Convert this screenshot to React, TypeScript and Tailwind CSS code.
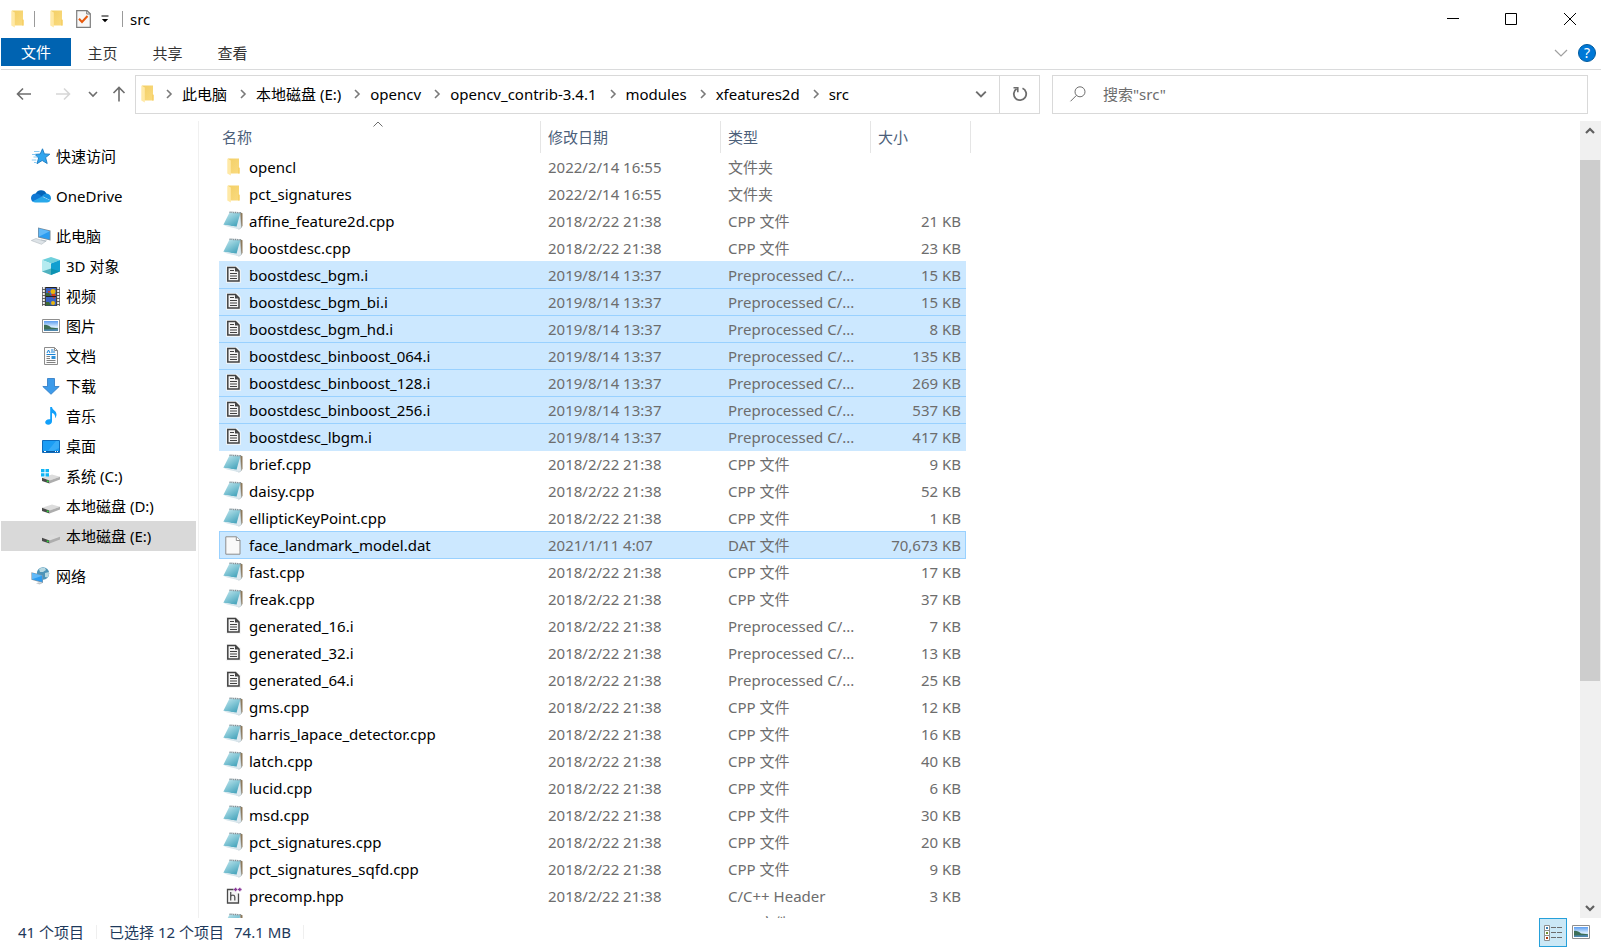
import type { ReactNode } from "react"

type FileKind = "folder" | "cpp" | "i" | "dat" | "hpp"

interface FileEntry {
    name: string
    date: string
    kind: FileKind
    size?: string
    selected?: boolean
    focused?: boolean
}

const typeNames: Record<FileKind, string> = {
    folder: "文件夹",
    cpp: "CPP 文件",
    i: "Preprocessed C/...",
    dat: "DAT 文件",
    hpp: "C/C++ Header",
}

const OLD = "2018/2/22 21:38"
const MID = "2019/8/14 13:37"

const files: FileEntry[] = [
    { name: "opencl", date: "2022/2/14 16:55", kind: "folder" },
    { name: "pct_signatures", date: "2022/2/14 16:55", kind: "folder" },
    { name: "affine_feature2d.cpp", date: OLD, kind: "cpp", size: "21 KB" },
    { name: "boostdesc.cpp", date: OLD, kind: "cpp", size: "23 KB" },
    { name: "boostdesc_bgm.i", date: MID, kind: "i", size: "15 KB", selected: true },
    { name: "boostdesc_bgm_bi.i", date: MID, kind: "i", size: "15 KB", selected: true },
    { name: "boostdesc_bgm_hd.i", date: MID, kind: "i", size: "8 KB", selected: true },
    { name: "boostdesc_binboost_064.i", date: MID, kind: "i", size: "135 KB", selected: true },
    { name: "boostdesc_binboost_128.i", date: MID, kind: "i", size: "269 KB", selected: true },
    { name: "boostdesc_binboost_256.i", date: MID, kind: "i", size: "537 KB", selected: true },
    { name: "boostdesc_lbgm.i", date: MID, kind: "i", size: "417 KB", selected: true },
    { name: "brief.cpp", date: OLD, kind: "cpp", size: "9 KB" },
    { name: "daisy.cpp", date: OLD, kind: "cpp", size: "52 KB" },
    { name: "ellipticKeyPoint.cpp", date: OLD, kind: "cpp", size: "1 KB" },
    { name: "face_landmark_model.dat", date: "2021/1/11 4:07", kind: "dat", size: "70,673 KB", focused: true },
    { name: "fast.cpp", date: OLD, kind: "cpp", size: "17 KB" },
    { name: "freak.cpp", date: OLD, kind: "cpp", size: "37 KB" },
    { name: "generated_16.i", date: OLD, kind: "i", size: "7 KB" },
    { name: "generated_32.i", date: OLD, kind: "i", size: "13 KB" },
    { name: "generated_64.i", date: OLD, kind: "i", size: "25 KB" },
    { name: "gms.cpp", date: OLD, kind: "cpp", size: "12 KB" },
    { name: "harris_lapace_detector.cpp", date: OLD, kind: "cpp", size: "16 KB" },
    { name: "latch.cpp", date: OLD, kind: "cpp", size: "40 KB" },
    { name: "lucid.cpp", date: OLD, kind: "cpp", size: "6 KB" },
    { name: "msd.cpp", date: OLD, kind: "cpp", size: "30 KB" },
    { name: "pct_signatures.cpp", date: OLD, kind: "cpp", size: "20 KB" },
    { name: "pct_signatures_sqfd.cpp", date: OLD, kind: "cpp", size: "9 KB" },
    { name: "precomp.hpp", date: OLD, kind: "hpp", size: "3 KB" },
    { name: "sift.cpp", date: OLD, kind: "cpp", size: "44 KB" },
]

const crumbs = ["此电脑", "本地磁盘 (E:)", "opencv", "opencv_contrib-3.4.1", "modules", "xfeatures2d", "src"]

/* ---------- icons ---------- */

function FolderIcon() {
    return (
        <svg width="13" height="18" viewBox="0 0 13 18" className="shrink-0" aria-hidden="true">
            <defs>
                <linearGradient id="folderBack" x1="0" y1="0" x2="1" y2="1">
                    <stop offset="0" stopColor="#f3cf66" />
                    <stop offset="1" stopColor="#fadb80" />
                </linearGradient>
            </defs>
            <path d="M1 0.5h11v9.5h.6v5.500H3z" fill="url(#folderBack)" />
            <path d="M.3.5 3.800 2.500V17.500L.3 15.500z" fill="#ffe9a6" />
            <path d="M11.200 9.500h1.300v6h-1.300z" fill="#f6cd62" />
        </svg>
    )
}

function CppIcon() {
    return (
        <svg width="20" height="19" viewBox="0 0 20 19" className="shrink-0" aria-hidden="true">
            <defs>
                <linearGradient id="padBlue" x1="0" y1="0" x2=".7" y2="1">
                    <stop offset="0" stopColor="#c9e9f0" />
                    <stop offset=".5" stopColor="#86c8d7" />
                    <stop offset="1" stopColor="#45a3bb" />
                </linearGradient>
            </defs>
            <path d="M17 1.300 19.500 2.200V15L17.600 17.500z" fill="#8d7a5c" />
            <path d="M17 2.200 18.400 16.500 16 18.300 11.500 16z" fill="#dfeaf0" stroke="#a9b9c2" strokeWidth=".5" />
            <path d="M6.500 1.500 17.300 2.200 13.500 15.800.4 13.800z" fill="url(#padBlue)" />
            <path d="M.4 13.800 13.500 15.800 16 18.300 4 15.500z" fill="#d8e6ec" />
            <path d="M6.500 1.200 18 1.800" stroke="#7f8f96" strokeWidth="1.500" strokeDasharray="1.200 .6" />
        </svg>
    )
}

function PreprocessedIcon() {
    return (
        <svg width="15" height="17" viewBox="0 0 15 17" className="shrink-0" aria-hidden="true">
            <path d="M0 0h11l4 4v13H0z" fill="#f4f4f4" opacity=".8" />
            <path d="M1.800 1.500h7.700l3.500 3.500v10H1.800z" fill="#f4f4f4" stroke="#424242" strokeWidth="1.500" />
            <path d="M9 1.500v4h4z" fill="#424242" />
            <path d="M4 4.500h4M4 7.500h7M4 10h7M4 12.500h7" stroke="#424242" strokeWidth="1.200" />
        </svg>
    )
}

function BlankIcon() {
    return (
        <svg width="16" height="19" viewBox="0 0 16 19" className="shrink-0" aria-hidden="true">
            <path d="M.8.8h10.700l3.500 3.500v13.900H.8z" fill="#f9f9f9" stroke="#8c8c8c" />
            <path d="M11.300.8v3.700H15" fill="#fff" stroke="#8c8c8c" />
        </svg>
    )
}

function HeaderIcon() {
    return (
        <svg width="17" height="18" viewBox="0 0 17 18" className="shrink-0" aria-hidden="true">
            <path d="M8.500 2.500H2.500v13.500h11V6.500" fill="#f4f4f4" stroke="#4a4a4a" strokeWidth="1.300" />
            <path d="M5.700 5v8.500M5.700 9.700q.3-1.500 2.100-1.500t2 1.800v3.500" fill="none" stroke="#555" strokeWidth="1.300" />
            <path d="M8.800 2.500h3.600M10.600.7v3.600M13 2.500h3.600M14.800.7v3.600" stroke="#8a3a9a" strokeWidth="1.400" />
        </svg>
    )
}

const fileIcons: Record<FileKind, ReactNode> = {
    folder: <FolderIcon />,
    cpp: <CppIcon />,
    i: <PreprocessedIcon />,
    dat: <BlankIcon />,
    hpp: <HeaderIcon />,
}

function StarIcon() {
    return (
        <svg width="20" height="17" viewBox="0 0 20 17" aria-hidden="true">
            <path d="M11.500.8 13.400 5.900 18.800 6.200 14.600 9.600 16.200 15.500 11.200 12.500 6 15.700 7.600 10 4 6.400 9.200 6z" fill="#30a5ee" stroke="#1878c0" strokeWidth=".9" />
            <path d="M3 3.500h5.500M1 6.500h4M2.500 9h4M.8 12h4.500M3 14.500h2.500" stroke="#7cc4f2" strokeWidth=".9" />
        </svg>
    )
}

function CloudIcon() {
    return (
        <svg width="20" height="14" viewBox="0 0 20 14" aria-hidden="true">
            <path d="M4.500 5A6 6 0 0 1 15.500 4.500L11 8z" fill="#0364b8" />
            <path d="M4.500 4.500C1.500 4.800 0 6.800 0 9c0 1.500.6 2.800 1.700 3.700L12 8.300 8 5.200C7 4.600 5.800 4.400 4.500 4.500z" fill="#0f78d4" />
            <path d="M15.500 4.500c2.600.3 4.500 2.200 4.500 4.700 0 .8-.2 1.500-.5 2L11 7c1-1.300 2.500-2.500 4.500-2.500z" fill="#1490df" />
            <path d="M1.500 12.400 11 7.500l8.500 4c-.7 1.200-2 1.900-3.500 1.900H4.500c-1.100 0-2.200-.4-3-1z" fill="#28a8ea" />
        </svg>
    )
}

function ComputerIcon() {
    return (
        <svg width="20" height="18" viewBox="0 0 20 18" aria-hidden="true">
            <path d="M7 .5 19.500 3.500V13.500L7 10.500z" fill="#7a8b99" />
            <path d="M7.800 1.600 18.700 4.300V12.400L7.800 9.700z" fill="#2c9cf0" />
            <path d="M7.800 1.600 18.700 4.300 7.800 9.700z" fill="#62b9f7" />
            <path d="M10 12.500 16 13.500 14.500 15 9 13.800z" fill="#b8c2c9" />
            <path d="M.3 13.500 5 11.500 14.500 14.500 10.500 17.300z" fill="#dde3e7" stroke="#b2bbc1" strokeWidth=".6" />
        </svg>
    )
}

function CubeIcon() {
    return (
        <svg width="18" height="18" viewBox="0 0 18 18" aria-hidden="true">
            <path d="M9 0 18 3 9 6.500 0 3z" fill="#6fd0dc" />
            <path d="M0 3 9 6.500V18L0 14.500z" fill="#b5ebf0" />
            <path d="M18 3 9 6.500V18l9-3.500z" fill="#109fd0" />
            <path d="M0 14.500 9 11.500 18 14.500 9 18z" fill="#0c8a9c" opacity=".6" />
        </svg>
    )
}

function VideoIcon() {
    return (
        <svg width="18" height="19" viewBox="0 0 18 19" aria-hidden="true">
            <path d="M0 0h18v19H0z" fill="#606060" />
            <path d="M1.800 0v19M16.200 0v19" stroke="#f0f0f0" strokeWidth="2" strokeDasharray="2 1" />
            <path d="M3.500 0h11v19h-11z" fill="#222" />
            <path d="M4 1h10v8H4zM4 10h10v8.500H4z" fill="#3b63c4" />
            <path d="M4 6h3l2 3H4zM4 15h3l2 3.500H4z" fill="#3f6b33" />
            <circle cx="11" cy="4.500" r="2.500" fill="#e9b60c" />
            <path d="M9.500 7h4v2h-4zM6 4h2v1.500H6z" fill="#d63d18" />
            <circle cx="11" cy="16" r="2" fill="#e9b60c" />
            <path d="M10.500 10h2.500l-1 2z" fill="#d63d18" />
        </svg>
    )
}

function PictureIcon() {
    return (
        <svg width="18" height="14" viewBox="0 0 18 14" aria-hidden="true">
            <defs>
                <linearGradient id="sky" x1="0" y1="0" x2="0" y2="1">
                    <stop offset="0" stopColor="#5c9df0" />
                    <stop offset=".6" stopColor="#dcefff" />
                    <stop offset="1" stopColor="#7fb2d8" />
                </linearGradient>
            </defs>
            <path d="M.5.5h17v13H.5z" fill="#fff" stroke="#8e8e8e" />
            <path d="M2 2h14v10H2z" fill="url(#sky)" />
            <path d="M2 6c2-.5 5 .5 7 2.500l7 .8V12H2z" fill="#3d6f57" />
            <path d="M2 10.500 16 10v2H2z" fill="#4f88ae" />
        </svg>
    )
}

function DocumentIcon() {
    return (
        <svg width="18" height="18" viewBox="0 0 18 18" aria-hidden="true">
            <path d="M2.500.5h10l3 3v14h-13z" fill="#fbfbfb" stroke="#8c8c8c" />
            <path d="M12.500.5v3h3" fill="none" stroke="#8c8c8c" />
            <path d="M5 6l1.500-3L8 6M9 3h2.500M9 5h4" stroke="#1683d8" fill="none" />
            <path d="M4.500 7.500h9" stroke="#1683d8" />
            <path d="M4.500 9.500h3.500M4.500 11.500h3.500M4.500 13.500h9M4.500 15.500h9" stroke="#808080" />
            <path d="M9.500 9h4v3h-4z" fill="#2f8fd6" />
        </svg>
    )
}

function DownloadIcon() {
    return (
        <svg width="18" height="17" viewBox="0 0 18 17" aria-hidden="true">
            <path d="M5.500.5h7v8h4.700L9 16.300.8 8.500h4.700z" fill="#3d9bea" stroke="#2a76c2" strokeWidth=".8" />
        </svg>
    )
}

function MusicIcon() {
    return (
        <svg width="18" height="18" viewBox="0 0 18 18" aria-hidden="true">
            <path d="M8.200 0h1.800c.2 3 4.500 3.500 4.500 7.500 0 1.500-.6 2.800-1.500 3.800.7-3-.8-4.800-3-5.200v8.200c0 2-1.700 3.500-3.800 3.500-1.700 0-3-.9-3-2.500 0-2 2.300-3.600 5-3z" fill="#12a0fa" />
        </svg>
    )
}

function DesktopIcon() {
    return (
        <svg width="18" height="13" viewBox="0 0 18 13" aria-hidden="true">
            <path d="M.5.5h17v12H.5z" fill="#1b9df5" stroke="#0f6cbd" />
            <path d="M17 1v7L9 12H5L14 1z" fill="#4bb4fa" opacity=".6" />
            <path d="M1 11.500h16" stroke="#0a5aa0" />
            <path d="M2 11.500h2M13 11.500h1M15 11.500h1" stroke="#fff" />
        </svg>
    )
}

function DriveIcon({ system = false }: { system?: boolean }) {
    return (
        <svg width="19" height="16" viewBox="0 0 19 16" aria-hidden="true">
            <path d="M1 9.800 11 6.500 19 8.800 8.500 12.500z" fill="#dcdcdc" />
            <path d="M1 9.800 8.500 12.500V15.500L1 13z" fill="#4a4a4a" />
            <path d="M8.500 12.500 19 8.800v2.800L8.500 15.500z" fill="#adadad" />
            <path d="M5.800 12.600h1.800v1.500H5.800z" fill="#2fe03a" />
            {system && <path d="M0 1h3.500v3.200H0zM4.500 1H8v3.200H4.500zM0 5.200h3.500v3.200H0zM4.500 5.200H8v3.200H4.500z" fill="#10b5f5" />}
        </svg>
    )
}

function NetworkIcon() {
    return (
        <svg width="19" height="18" viewBox="0 0 19 18" aria-hidden="true">
            <circle cx="12" cy="6.500" r="6.200" fill="#4d94b8" />
            <path d="M8 2q3-2 6-1l1 2-3 2-3 0zM14 6l4-1q.4 3-1.200 5.500L14 10z" fill="#b9d9e2" />
            <path d="M.4 5.200 12 8.200V16L.4 12.800z" fill="#8497a5" />
            <path d="M1 6 11.300 8.700V15L1 12.300z" fill="#2c9cf0" />
            <path d="M1 6 11.300 8.700 1 12.300z" fill="#62b9f7" />
            <path d="M5 16.200 8 15.300l3.500 1L8.500 17.500z" fill="#c0c8cd" />
        </svg>
    )
}

function Chevron({ dir, size = 10, bold = false, className = "" }: { dir: "right" | "down" | "up"; size?: number; bold?: boolean; className?: string }) {
    const d = dir === "right" ? "M3 1l4 4-4 4" : dir === "down" ? "M1 3l4 4 4-4" : "M1 7l4-4 4 4"
    return (
        <svg width={size} height={size} viewBox="0 0 10 10" className={className} aria-hidden="true">
            <path d={d} fill="none" stroke="currentColor" strokeWidth={bold ? 2.2 : 1.6} />
        </svg>
    )
}

/* ---------- window parts ---------- */

function TitleBar() {
    return (
        <header className="flex h-[38px] items-center justify-between pr-px pl-[11px]">
            <div className="flex items-center">
                <FolderIcon />
                <span className="ml-2.5 h-4 w-px bg-[#9a9a9a]" />
                <button aria-label="新建文件夹" className="ml-[15px]">
                    <FolderIcon />
                </button>
                <button aria-label="属性" className="ml-[13px]">
                    <svg width="15" height="18" viewBox="0 0 15 18" aria-hidden="true">
                        <path d="M.7.700h10.300l3.300 3v13.600H.7z" fill="#f7f7f7" stroke="#7d7d7d" strokeWidth="1.200" />
                        <path d="M10.700.7v3.300h3.500" fill="none" stroke="#7d7d7d" />
                        <path d="M3 8.800 6 12 11.500 6" fill="none" stroke="#e8590c" strokeWidth="2" />
                    </svg>
                </button>
                <button aria-label="自定义快速访问工具栏" className="ml-2.5">
                    <svg width="8" height="8" viewBox="0 0 8 8" aria-hidden="true">
                        <path d="M.5 1h7" stroke="#000" />
                        <path d="M.8 4h6.400L4 7.300z" fill="#000" />
                    </svg>
                </button>
                <span className="ml-[13px] h-4 w-px bg-[#9a9a9a]" />
                <h1 className="ml-[7px]">src</h1>
            </div>
            <div className="flex h-full text-black">
                <button aria-label="最小化" className="flex w-[58px] items-center justify-center">
                    <svg width="12" height="12" viewBox="0 0 12 12"><path d="M0 5.500h12" stroke="currentColor" /></svg>
                </button>
                <button aria-label="最大化" className="flex w-[58px] items-center justify-center">
                    <svg width="12" height="12" viewBox="0 0 12 12"><path d="M.5.500h11v11H.5z" fill="none" stroke="currentColor" /></svg>
                </button>
                <button aria-label="关闭" className="flex w-[60px] items-center justify-center">
                    <svg width="12" height="12" viewBox="0 0 12 12"><path d="M0 0l12 12M12 0 0 12" stroke="currentColor" /></svg>
                </button>
            </div>
        </header>
    )
}

function Ribbon() {
    return (
        <div className="ml-px flex h-8 items-start justify-between border-b border-[#dadbdc] pr-[5px]">
            <div className="flex">
                <button className="h-7 w-[70px] bg-[#0063b1] text-white">文件</button>
                {["主页", "共享", "查看"].map((tab) => (
                    <button key={tab} className="h-[30px] w-[65px] pr-0.5 text-[#333333]">{tab}</button>
                ))}
            </div>
            <div className="flex h-[30px] items-center gap-2.5">
                <button aria-label="展开功能区" className="text-[#a0a0a0]">
                    <svg width="14" height="8" viewBox="0 0 14 8"><path d="M1 1l6 6 6-6" fill="none" stroke="currentColor" strokeWidth="1.200" /></svg>
                </button>
                <button aria-label="帮助" className="flex size-[18px] items-center justify-center rounded-full border border-[#005a9e] bg-[#0078d7] text-sm leading-none text-white">
                    ?
                </button>
            </div>
        </div>
    )
}

function AddressRow() {
    return (
        <div className="flex h-[51px] items-center pr-[13px] pb-[3px] pl-4 text-[#6d6d6d]">
            <button aria-label="后退">
                <svg width="16" height="14" viewBox="0 0 16 14"><path d="M15 7H1.500M7 1.500 1.500 7 7 12.500" fill="none" stroke="currentColor" strokeWidth="1.600" /></svg>
            </button>
            <button aria-label="前进" className="ml-[23px] text-[#d6d6d6]">
                <svg width="16" height="14" viewBox="0 0 16 14"><path d="M1 7h13.500M9 1.500 14.500 7 9 12.500" fill="none" stroke="currentColor" strokeWidth="1.600" /></svg>
            </button>
            <button aria-label="最近浏览的位置" className="ml-[17px]">
                <Chevron dir="down" />
            </button>
            <button aria-label="上移" className="ml-3.5">
                <svg width="14" height="16" viewBox="0 0 14 16"><path d="M7 15.500V1.500M1.500 7 7 1.500 12.500 7" fill="none" stroke="currentColor" strokeWidth="1.600" /></svg>
            </button>

            <div className="ml-[9px] flex h-[39px] min-w-0 flex-1 items-stretch border border-[#d9d9d9]">
                <nav aria-label="地址" className="flex min-w-0 flex-1 items-center overflow-hidden pl-[5px] whitespace-nowrap">
                    <FolderIcon />
                    <ol className="ml-0.5 flex text-black">
                        {crumbs.map((crumb) => (
                            <li key={crumb} className="flex items-center">
                                <Chevron dir="right" className="mx-2 text-[#7a7a7a]" />
                                <a href="#" className="pr-[3px]">{crumb}</a>
                            </li>
                        ))}
                    </ol>
                </nav>
                <button aria-label="历史记录" className="flex w-9 items-center justify-center">
                    <Chevron dir="down" size={12} />
                </button>
                <button aria-label="刷新" className="flex w-10 items-center justify-center border-l border-[#d9d9d9]">
                    <svg width="16" height="16" viewBox="0 0 16 16">
                        <path d="M10.500 2.300A6.200 6.200 0 1 1 4.600 2.800" fill="none" stroke="currentColor" strokeWidth="1.800" />
                        <path d="M1.500 1.800h4.300v4.400" fill="none" stroke="currentColor" strokeWidth="1.600" />
                    </svg>
                </button>
            </div>

            <div className="ml-3 flex h-[39px] w-[536px] items-center border border-[#d9d9d9] pl-4">
                <svg width="18" height="16" viewBox="0 0 18 16" className="shrink-0" aria-hidden="true">
                    <circle cx="11" cy="5.800" r="5" fill="none" stroke="currentColor" />
                    <path d="M7.500 9.300 1.500 15.300" stroke="currentColor" />
                </svg>
                <input aria-label="搜索" placeholder={'搜索"src"'} className="ml-4 min-w-0 flex-1 outline-none placeholder:text-[#6d6d6d]" />
            </div>
        </div>
    )
}

function NavItem({ icon, label, nested = false, active = false }: { icon: ReactNode; label: string; nested?: boolean; active?: boolean }) {
    return (
        <a href="#" className={`mr-0.5 ml-px flex h-[30px] items-center gap-[5px] ${nested ? "pl-[39px]" : "pl-[29px]"} ${active ? "bg-[#d9d9d9]" : ""}`}>
            <span className="flex w-[21px] shrink-0 justify-center">{icon}</span>
            {label}
        </a>
    )
}

function Sidebar() {
    return (
        <nav aria-label="导航窗格" className="flex w-[199px] shrink-0 flex-col gap-2.5 overflow-hidden border-r border-[#f0f0f0] pt-5 text-black">
            <NavItem icon={<StarIcon />} label="快速访问" />
            <NavItem icon={<CloudIcon />} label="OneDrive" />
            <div>
                <NavItem icon={<ComputerIcon />} label="此电脑" />
                <NavItem nested icon={<CubeIcon />} label="3D 对象" />
                <NavItem nested icon={<VideoIcon />} label="视频" />
                <NavItem nested icon={<PictureIcon />} label="图片" />
                <NavItem nested icon={<DocumentIcon />} label="文档" />
                <NavItem nested icon={<DownloadIcon />} label="下载" />
                <NavItem nested icon={<MusicIcon />} label="音乐" />
                <NavItem nested icon={<DesktopIcon />} label="桌面" />
                <NavItem nested icon={<DriveIcon system />} label="系统 (C:)" />
                <NavItem nested icon={<DriveIcon />} label="本地磁盘 (D:)" />
                <NavItem nested active icon={<DriveIcon />} label="本地磁盘 (E:)" />
            </div>
            <NavItem icon={<NetworkIcon />} label="网络" />
        </nav>
    )
}

function FileRow({ file, joined }: { file: FileEntry; joined: boolean }) {
    let cell = "h-[27px] p-0"
    if (file.focused) cell += " border-t border-[#99d1ff] bg-[#cce8ff] shadow-[0_1px_0_#99d1ff]"
    else if (file.selected && joined) cell += " bg-[#cce8ff] shadow-[inset_0_1px_0_#99d1ff,0_1px_0_#cce8ff]"
    else if (file.selected) cell += " bg-[#cce8ff]"

    return (
        <tr>
            <td className={`${cell} ${file.focused ? "border-l" : ""}`}>
                <div className={`flex items-center gap-1.5 text-black ${file.focused ? "pl-[3px]" : "pl-1"}`}>
                    <span className="flex w-5 shrink-0 justify-center">{fileIcons[file.kind]}</span>
                    {file.name}
                </div>
            </td>
            <td className={cell}><span className="pl-[7px]">{file.date}</span></td>
            <td className={cell}><span className="pl-[7px]">{typeNames[file.kind]}</span></td>
            <td className={`${cell} text-right ${file.focused ? "border-r" : ""}`}>
                <span className={file.focused ? "pr-1" : "pr-[5px]"}>{file.size}</span>
            </td>
            <td />
        </tr>
    )
}

function FileTable() {
    const head = "relative h-8 border-r border-[#e5e5e5] p-0 text-left font-normal"
    return (
        <main className="min-w-0 flex-1 overflow-hidden pl-5">
            <table className="w-[752px] table-fixed border-separate border-spacing-0 whitespace-nowrap text-[#6d6d6d]">
                <colgroup>
                    <col className="w-[322px]" />
                    <col className="w-[180px]" />
                    <col className="w-[150px]" />
                    <col className="w-[95px]" />
                    <col className="w-[5px]" />
                </colgroup>
                <thead className="text-[#4c607a]">
                    <tr>
                        <th className={head}>
                            <svg width="10" height="6" viewBox="0 0 10 6" className="absolute inset-x-0 top-0 mx-auto -translate-x-0.5" aria-hidden="true">
                                <path d="M.5 5.500 5 1l4.500 4.500" fill="none" stroke="#6d6d6d" />
                            </svg>
                            <button className="pl-[3px]">名称</button>
                        </th>
                        <th className={head}><button className="pl-[7px]">修改日期</button></th>
                        <th className={head}><button className="pl-[7px]">类型</button></th>
                        <th className={head} colSpan={2}><button className="pl-[7px]">大小</button></th>
                    </tr>
                </thead>
                <tbody>
                    {files.map((file, i) => (
                        <FileRow key={file.name} file={file} joined={i > 0 && !!files[i - 1].selected} />
                    ))}
                </tbody>
            </table>
        </main>
    )
}

function Scrollbar() {
    return (
        <div className="flex w-[21px] shrink-0 flex-col bg-[#f0f0f0] text-[#606060]">
            <button aria-label="向上滚动" className="mb-[19px] flex h-5 items-center justify-center pr-0.5">
                <Chevron dir="up" bold />
            </button>
            <div className="mr-px grow-[12] bg-[#cdcdcd]" />
            <div className="grow-[5]" />
            <button aria-label="向下滚动" className="flex h-5 items-center justify-center pr-0.5">
                <Chevron dir="down" bold />
            </button>
        </div>
    )
}

function StatusBar() {
    return (
        <footer className="flex h-[30px] shrink-0 items-start justify-between pr-[11px] pl-[18px] text-[#1e395b]">
            <div className="flex h-7 items-center">
                <span>41 个项目</span>
                <span className="mx-3 h-3.5 w-px bg-[#efefef]" />
                <span>已选择 12 个项目</span>
                <span className="ml-2.5">74.1 MB</span>
                <span className="ml-3 h-3.5 w-px bg-[#efefef]" />
            </div>
            <div className="flex gap-[5px]">
                <button aria-label="详细信息" className="flex h-[29px] w-7 items-center justify-center border border-[#26a0da] bg-[#cbe8f6]">
                    <svg width="18" height="16" viewBox="0 0 18 16">
                        <path d="M.5.500h5v5h-5zM.5 5.500h5v5h-5zM.5 10.500h5v5h-5z" fill="#fff" stroke="#8e8e8e" />
                        <path d="M2 2h2v2H2z" fill="#3b80b4" />
                        <path d="M2 7h2v2H2z" fill="#6f8f2d" />
                        <path d="M2 12h2v2H2z" fill="#b33a12" />
                        <path d="M7 2.500h5M13 2.500h5M7 7.500h5M13 7.500h5M7 12.500h5M13 12.500h5" stroke="#6d6d6d" />
                    </svg>
                </button>
                <button aria-label="大图标" className="flex h-7 w-[18px] items-center justify-center">
                    <PictureIcon />
                </button>
            </div>
        </footer>
    )
}

export default function App() {
    return (
        <div className="flex h-screen flex-col overflow-hidden bg-white font-['Noto_Sans','Noto_Sans_CJK_SC',sans-serif] text-[15px] leading-5 text-black">
            <TitleBar />
            <Ribbon />
            <AddressRow />
            <div className="flex min-h-0 flex-1">
                <Sidebar />
                <FileTable />
                <Scrollbar />
            </div>
            <StatusBar />
        </div>
    )
}
